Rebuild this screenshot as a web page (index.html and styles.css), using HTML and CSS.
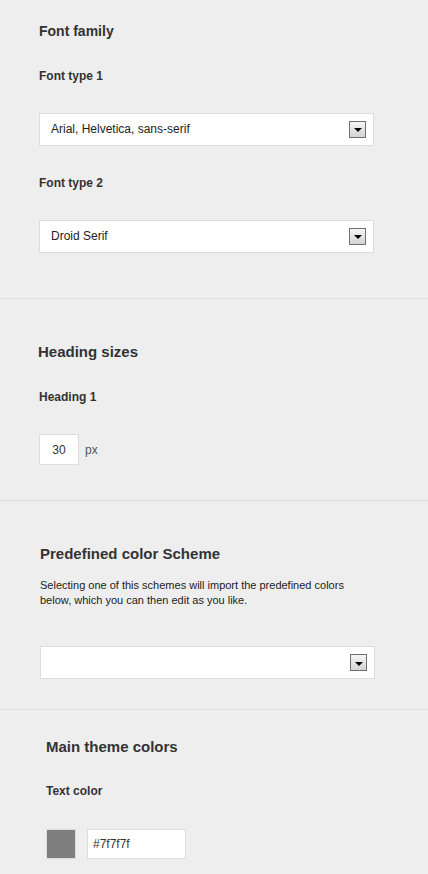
FILE: index.html
```html
<!DOCTYPE html>
<html lang="en">
<head>
<meta charset="utf-8">
<title>Theme options</title>
<link rel="stylesheet" href="styles.css">
</head>
<body>
<div class="panel">
  <section class="section s-font">
    <h2 class="heading heading-sm">Font family</h2>
    <label class="label l-first">Font type 1</label>
    <div class="select">
      <span class="select-text">Arial, Helvetica, sans-serif</span>
      <span class="select-btn"><span class="tri"></span></span>
    </div>
    <label class="label">Font type 2</label>
    <div class="select">
      <span class="select-text">Droid Serif</span>
      <span class="select-btn"><span class="tri"></span></span>
    </div>
  </section>

  <section class="section s-heading">
    <h2 class="heading">Heading sizes</h2>
    <label class="label">Heading 1</label>
    <div class="size-row">
      <span class="num-input">30</span>
      <span class="unit">px</span>
    </div>
  </section>

  <section class="section s-scheme">
    <h2 class="heading">Predefined color Scheme</h2>
    <p class="desc">Selecting one of this schemes will import the predefined colors below, which you can then edit as you like.</p>
    <div class="select">
      <span class="select-text"></span>
      <span class="select-btn"><span class="tri"></span></span>
    </div>
  </section>

  <section class="section s-colors">
    <h2 class="heading">Main theme colors</h2>
    <label class="label">Text color</label>
    <div class="color-row">
      <span class="swatch"></span>
      <span class="hex-input">#7f7f7f</span>
    </div>
  </section>
</div>
</body>
</html>
```

FILE: styles.css
```css
* { box-sizing: border-box; }

html, body {
  margin: 0;
  padding: 0;
  background: #eeeeee;
}

body {
  font-family: "Liberation Sans", Arial, sans-serif;
  color: #333333;
  width: 428px;
  height: 874px;
  overflow: hidden;
}

.section {
  border-bottom: 1px solid #dddddd;
}

.s-font { padding: 21px 54px 45px 39px; }
.s-heading { padding: 43px 54px 35px 39px; }
.s-scheme { padding: 43px 53px 30px 40px; }
.s-colors { padding: 27px 54px 20px 46px; border-bottom: none; }

.heading {
  margin: 0;
  font-size: 15px;
  line-height: 20px;
  font-weight: bold;
  color: #333333;
}

.heading-sm { font-size: 14px; }

.s-heading .heading { margin-left: -1px; }

.label {
  display: block;
  margin: 25px 0 27px;
  font-size: 12px;
  line-height: 20px;
  font-weight: bold;
  color: #333333;
}

.s-font .label + .select + .label { margin-top: 27px; }

.select {
  display: flex;
  align-items: center;
  justify-content: space-between;
  height: 33px;
  background: #ffffff;
  border: 1px solid #dddddd;
  padding: 0 7px 1px 11px;
}

.select-text {
  font-size: 12px;
  color: #222222;
}

.select-btn {
  width: 17px;
  height: 17px;
  border: 1px solid #707070;
  background: linear-gradient(#f6f6f6, #d4d4d4);
  display: flex;
  align-items: center;
  justify-content: center;
  padding-top: 2px;
}

.tri {
  width: 0;
  height: 0;
  border-left: 4px solid transparent;
  border-right: 4px solid transparent;
  border-top: 4px solid #000000;
}

.size-row {
  display: flex;
  align-items: center;
  gap: 6px;
}

.num-input {
  width: 40px;
  height: 31px;
  background: #ffffff;
  border: 1px solid #dddddd;
  font-size: 12px;
  color: #333333;
  display: flex;
  align-items: center;
  justify-content: center;
}

.unit {
  font-size: 12px;
  color: #555555;
}

.desc {
  margin: 14px 0 38px;
  font-size: 11px;
  line-height: 15px;
  color: #222222;
}

.s-scheme .select { padding-top: 0; padding-bottom: 0; }

.s-colors .label { margin: 24px 0 28px; }

.color-row {
  display: flex;
  gap: 11px;
}

.swatch {
  width: 30px;
  height: 30px;
  background: #7f7f7f;
  border: 1px solid #dddddd;
}

.hex-input {
  width: 99px;
  height: 30px;
  background: #ffffff;
  border: 1px solid #dddddd;
  font-size: 12px;
  color: #333333;
  display: flex;
  align-items: center;
  padding-left: 5px;
}
```
